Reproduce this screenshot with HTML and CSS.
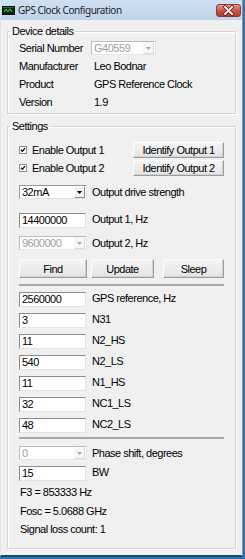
FILE: index.html
```html
<!DOCTYPE html>
<html lang="en">
<head>
	<meta charset="UTF-8">
	<title>GPS Clock Configuration</title>
	<link rel="stylesheet" href="styles.css">
</head>
<body>
	<div class="window">
		<div class="titlebar">
			<svg class="app-icon" width="13" height="9" viewBox="0 0 13 9">
				<rect x="0.5" y="0.5" width="12" height="8" fill="#0c2a10" stroke="#111"/>
				<path d="M2 6 L4 3 L6 6 L8 3 L10 6" fill="none" stroke="#3fd24a" stroke-width="1"/>
				<rect x="1" y="1" width="11" height="1" fill="#2a6a30"/>
			</svg>
			<span class="title">GPS Clock Configuration</span>
			<span class="close">
				<svg width="25" height="13" viewBox="0 0 25 13">
					<path d="M9 3 L16 10 M16 3 L9 10" stroke="#6b1b14" stroke-width="3.4" stroke-linecap="square"/>
					<path d="M9 3 L16 10 M16 3 L9 10" stroke="#fff" stroke-width="1.8" stroke-linecap="square"/>
				</svg>
			</span>
		</div>
		<div class="client">
			<fieldset class="group device">
				<legend>Device details</legend>
				<div class="info-row">
					<span class="key">Serial Number</span>
					<div class="combo disabled serial">
						<span class="combo-text">G40559</span>
						<span class="combo-btn"><svg width="5" height="3" viewBox="0 0 5 3"><path d="M0 0 H5 L2.5 3 Z"/></svg></span>
					</div>
				</div>
				<div class="info-row">
					<span class="key">Manufacturer</span>
					<span class="val">Leo Bodnar</span>
				</div>
				<div class="info-row">
					<span class="key">Product</span>
					<span class="val">GPS Reference Clock</span>
				</div>
				<div class="info-row">
					<span class="key">Version</span>
					<span class="val">1.9</span>
				</div>
			</fieldset>

			<fieldset class="group settings">
				<legend>Settings</legend>
				<div class="check-row">
					<label class="check">
						<svg width="8" height="8" viewBox="0 0 8 8"><rect x="0.5" y="0.5" width="7" height="7" fill="#fff" stroke="#8e8f8f"/><path d="M2 3.8 L3.4 5.3 L6 2.2" fill="none" stroke="#000" stroke-width="1.3"/></svg>
						<span>Enable Output 1</span>
					</label>
					<button class="btn identify">Identify Output 1</button>
				</div>
				<div class="check-row">
					<label class="check">
						<svg width="8" height="8" viewBox="0 0 8 8"><rect x="0.5" y="0.5" width="7" height="7" fill="#fff" stroke="#8e8f8f"/><path d="M2 3.8 L3.4 5.3 L6 2.2" fill="none" stroke="#000" stroke-width="1.3"/></svg>
						<span>Enable Output 2</span>
					</label>
					<button class="btn identify">Identify Output 2</button>
				</div>

				<div class="field-row drive">
					<div class="combo">
						<span class="combo-text">32mA</span>
						<span class="combo-btn"><svg width="5" height="3" viewBox="0 0 5 3"><path d="M0 0 H5 L2.5 3 Z"/></svg></span>
					</div>
					<span class="lbl">Output drive strength</span>
				</div>
				<div class="field-row out1">
					<div class="textbox">14400000</div>
					<span class="lbl top">Output 1, Hz</span>
				</div>
				<div class="field-row">
					<div class="combo disabled">
						<span class="combo-text">9600000</span>
						<span class="combo-btn"><svg width="5" height="3" viewBox="0 0 5 3"><path d="M0 0 H5 L2.5 3 Z"/></svg></span>
					</div>
					<span class="lbl">Output 2, Hz</span>
				</div>

				<div class="actions">
					<button class="btn find">Find</button>
					<button class="btn update">Update</button>
					<button class="btn sleep">Sleep</button>
				</div>

				<div class="separator"></div>

				<div class="field-row tb">
					<div class="textbox">2560000</div>
					<span class="lbl top">GPS reference, Hz</span>
				</div>
				<div class="field-row tb">
					<div class="textbox">3</div>
					<span class="lbl top">N31</span>
				</div>
				<div class="field-row tb">
					<div class="textbox">11</div>
					<span class="lbl top">N2_HS</span>
				</div>
				<div class="field-row tb">
					<div class="textbox">540</div>
					<span class="lbl top">N2_LS</span>
				</div>
				<div class="field-row tb">
					<div class="textbox">11</div>
					<span class="lbl top">N1_HS</span>
				</div>
				<div class="field-row tb">
					<div class="textbox">32</div>
					<span class="lbl top">NC1_LS</span>
				</div>
				<div class="field-row tb">
					<div class="textbox">48</div>
					<span class="lbl top">NC2_LS</span>
				</div>

				<div class="separator second"></div>

				<div class="field-row phase">
					<div class="combo disabled">
						<span class="combo-text">0</span>
						<span class="combo-btn"><svg width="5" height="3" viewBox="0 0 5 3"><path d="M0 0 H5 L2.5 3 Z"/></svg></span>
					</div>
					<span class="lbl">Phase shift, degrees</span>
				</div>
				<div class="field-row tb">
					<div class="textbox">15</div>
					<span class="lbl top">BW</span>
				</div>

				<div class="status first">F3 = 853333 Hz</div>
				<div class="status">Fosc = 5.0688 GHz</div>
				<div class="status">Signal loss count: 1</div>
			</fieldset>
		</div>
	</div>
</body>
</html>
```

FILE: styles.css
```css
* {
	margin: 0;
	padding: 0;
	box-sizing: border-box;
}
body {
	background: #2b74b1;
	font-family: "Liberation Sans", Arial, sans-serif;
	font-size: 11px;
	letter-spacing: -0.5px;
	color: #000;
}
.window {
	width: 243px;
	height: 557px;
	background: #f0f0f0;
	border-left: 1px solid #dbe6f1;
	border-right: 1px solid #7f95ab;
	border-bottom: 2px solid #1d4d5f;
	display: flex;
	flex-direction: column;
}

/* title bar */
.titlebar {
	height: 20px;
	flex: none;
	display: flex;
	align-items: center;
	background: linear-gradient(#cfe0f2, #bfd4ea);
}
.app-icon {
	margin-left: 1px;
	margin-top: 1px;
}
.title {
	margin-left: 3px;
	font-family: "Noto Sans", "Open Sans", sans-serif;
	font-size: 10px;
	letter-spacing: -0.45px;
	color: #1e1e1e;
}
.close {
	margin-left: auto;
	margin-right: 1px;
	align-self: flex-start;
	margin-top: 4px;
	width: 25px;
	height: 13px;
	border-radius: 3px;
	border: 1px solid #8e3a32;
	background: linear-gradient(#e29b8f, #c9574a 50%, #b8392c);
	display: flex;
}
.close svg {
	margin: -1px;
}

/* client */
.client {
	flex: 1;
	padding: 4px 6px 0 6px;
}
.group {
	border: 1px solid #d5d5d5;
	box-shadow: inset 1px 1px 0 #fff, 1px 1px 0 #fff;
	padding: 1px 11px 2px 11px;
	min-inline-size: 0;
}
.group legend {
	line-height: 14px;
	padding: 0 2px;
	margin-left: -9px;
}
.settings {
	margin-top: 5px;
	padding-top: 9px;
	padding-bottom: 10px;
}

/* device details */
.info-row {
	display: flex;
	align-items: center;
	height: 18px;
}
.key {
	width: 72px;
}
.val {
	padding-left: 3px;
}

/* combo boxes */
.combo {
	width: 68px;
	height: 14px;
	display: flex;
	background: #fff;
	border: 1px solid;
	border-color: #9a9a9a #e2e2e2 #e2e2e2 #9a9a9a;
}
.combo.serial {
	width: 65px;
}
.combo-text {
	flex: 1;
	padding-left: 2px;
	line-height: 12px;
}
.combo-btn {
	width: 11px;
	margin: 0 1px 0 0;
	background: #f0f0f0;
	border: 1px solid;
	border-color: #fff #8a8a8a #8a8a8a #fff;
	display: flex;
	align-items: center;
	justify-content: center;
}
.combo.disabled {
	border-color: #bcbcbc #e6e6e6 #e6e6e6 #bcbcbc;
	color: #a0a0a0;
}
.combo.disabled .combo-btn {
	background: #f6f6f6;
	border-color: #f6f6f6 #d9d9d9 #d9d9d9 #f6f6f6;
	fill: #a8a8a8;
}

/* checkboxes */
.check-row {
	display: flex;
	align-items: center;
	height: 16px;
}
.check-row + .check-row {
	margin-top: 2px;
}
.check {
	display: flex;
	align-items: center;
}
.check svg {
	margin-right: 5px;
}

/* buttons */
.btn {
	font: inherit;
	letter-spacing: inherit;
	color: #000;
	background: linear-gradient(#f4f4f4, #e4e4e4);
	border: 1px solid;
	border-color: #fdfdfd #9c9c9c #9c9c9c #fdfdfd;
	box-shadow: inset -1px -1px 0 #d2d2d2;
}
.identify {
	margin-left: auto;
	width: 91px;
	height: 16px;
}
.actions {
	display: flex;
	margin-top: 9px;
}
.actions .btn {
	height: 19px;
}
.find {
	width: 68px;
}
.update {
	width: 63px;
	margin-left: 4px;
}
.sleep {
	width: 61px;
	margin-left: 9px;
}

/* field rows */
.field-row {
	display: grid;
	grid-template-columns: 73px auto;
	align-items: center;
	margin-top: 8px;
}
.field-row.drive {
	margin-top: 9px;
}
.field-row.out1 {
	margin-top: 14px;
}
.field-row.tb {
	margin-top: 6px;
}
.field-row.phase {
	margin-top: 7px;
}
.textbox {
	width: 67px;
	height: 15px;
	background: #fff;
	border: 1px solid;
	border-color: #8c8c8c #e3e3e3 #e3e3e3 #8c8c8c;
	padding-left: 2px;
	line-height: 13px;
}
.lbl.top {
	align-self: start;
	line-height: 13px;
}

.separator {
	height: 2px;
	margin-top: 6px;
	background: #a8a8a8;
}
.separator.second {
	margin-top: 4px;
}

.status {
	line-height: 18px;
	padding-left: 1px;
}
.status.first {
	margin-top: 2px;
}
.status + .status {
	margin-top: 1px;
}
.status:last-child {
	margin-top: 0;
}
```
